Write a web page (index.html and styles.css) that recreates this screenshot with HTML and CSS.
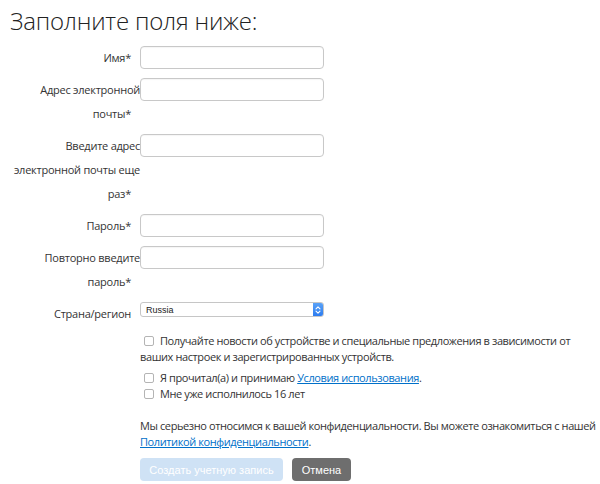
FILE: index.html
```html
<!DOCTYPE html>
<html lang="ru">
<head>
<meta charset="utf-8">
<link rel="stylesheet" href="styles.css">
</head>
<body>
<main class="page">
  <h1 class="title">Заполните поля ниже:</h1>
  <form class="form">
    <div class="fields">
      <label class="lbl">Имя<span class="req">*</span></label>
      <div class="field"><input class="inp" type="text"></div>

      <label class="lbl">Адрес электронной почты<span class="req">*</span></label>
      <div class="field"><input class="inp" type="text"></div>

      <label class="lbl">Введите адрес электронной почты еще раз<span class="req">*</span></label>
      <div class="field"><input class="inp" type="text"></div>

      <label class="lbl">Пароль<span class="req">*</span></label>
      <div class="field"><input class="inp" type="password"></div>

      <label class="lbl">Повторно введите пароль<span class="req">*</span></label>
      <div class="field"><input class="inp" type="password"></div>

      <label class="lbl">Страна/регион<span class="req"></span></label>
      <div class="field">
        <div class="select">
          <span class="select-val">Russia</span>
          <span class="stepper">
            <svg width="6" height="10" viewBox="0 0 6 10"><path d="M1 3.8 L3 1.8 L5 3.8 M1 6.2 L3 8.2 L5 6.2" fill="none" stroke="#fff" stroke-width="1.1" stroke-linecap="round" stroke-linejoin="round"/></svg>
          </span>
        </div>
      </div>
    </div>

    <div class="checks">
      <p class="check"><input class="cb" type="checkbox">Получайте новости об устройстве и специальные предложения в зависимости от ваших настроек и зарегистрированных устройств.</p>
      <p class="check gap"><input class="cb" type="checkbox">Я прочитал(а) и принимаю <a class="link" href="#">Условия использования</a>.</p>
      <p class="check"><input class="cb" type="checkbox">Мне уже исполнилось 16 лет</p>
      <p class="privacy">Мы серьезно относимся к вашей конфиденциальности. Вы можете ознакомиться с нашей <a class="link" href="#">Политикой конфиденциальности</a>.</p>
      <div class="buttons">
        <button class="btn btn-create" type="button">Создать учетную запись</button>
        <button class="btn btn-cancel" type="button">Отмена</button>
      </div>
    </div>
  </form>
</main>
</body>
</html>
```
FILE: styles.css
```css
html, body {
  margin: 0;
  padding: 0;
  background: #fff;
}
body {
  font-family: "Open Sans", "Noto Sans", sans-serif;
  color: #333;
}
.page {
  padding: 4px 0 0 10px;
}
.title {
  margin: 0;
  font-size: 24px;
  font-weight: 300;
  line-height: 33px;
  color: #222;
  letter-spacing: -0.2px;
}
.form {
  margin-top: 9px;
}
.fields {
  display: grid;
  grid-template-columns: 130px 184px;
  row-gap: 8px;
  align-items: start;
}
.lbl {
  font-size: 11px;
  letter-spacing: -0.25px;
  line-height: 24px;
  text-align: right;
  color: #333;
}
.req {
  margin-right: 9px;
}
.field {
  display: flex;
}
.inp {
  box-sizing: border-box;
  width: 184px;
  height: 23px;
  margin: 0;
  border: 1px solid #c8c8c8;
  border-radius: 4px;
  background: #fff;
  box-shadow: inset 0 1px 1px rgba(0,0,0,0.04);
}
.select {
  box-sizing: border-box;
  width: 184px;
  height: 15px;
  border: 1px solid #c6c6c6;
  border-radius: 3px;
  display: flex;
  align-items: center;
  justify-content: space-between;
  overflow: hidden;
  background: #fff;
}
.select-val {
  font-family: "Liberation Sans", Arial, sans-serif;
  font-size: 9px;
  color: #222;
  padding-left: 5px;
}
.stepper {
  width: 10px;
  align-self: stretch;
  background: linear-gradient(#5aa2f7, #2c7cf0);
  display: flex;
  align-items: center;
  justify-content: center;
}
.checks {
  margin: 7px 0 0 130px;
  font-size: 11px;
  letter-spacing: -0.4px;
  line-height: 16px;
  color: #333;
}
.check {
  margin: 0;
}
.check.gap {
  margin-top: 5px;
}
.cb {
  appearance: none;
  -webkit-appearance: none;
  box-sizing: border-box;
  width: 10px;
  height: 10px;
  margin: 0 6px 0 4px;
  border: 1px solid #b4b4b4;
  border-radius: 2px;
  background: #fff;
  vertical-align: -1px;
}
.link {
  color: #0070c9;
  text-decoration: underline;
}
.privacy {
  margin: 16px 0 0;
}
.buttons {
  display: flex;
  gap: 9px;
  margin-top: 8px;
}
.btn {
  height: 23px;
  border: 0;
  border-radius: 4px;
  font-family: "Liberation Sans", Arial, sans-serif;
  font-size: 11px;
  color: #fff;
  padding: 0;
}
.btn-create {
  width: 143px;
  background: #cfe2f5;
}
.btn-cancel {
  width: 59px;
  background: #6e6e6e;
}
```
